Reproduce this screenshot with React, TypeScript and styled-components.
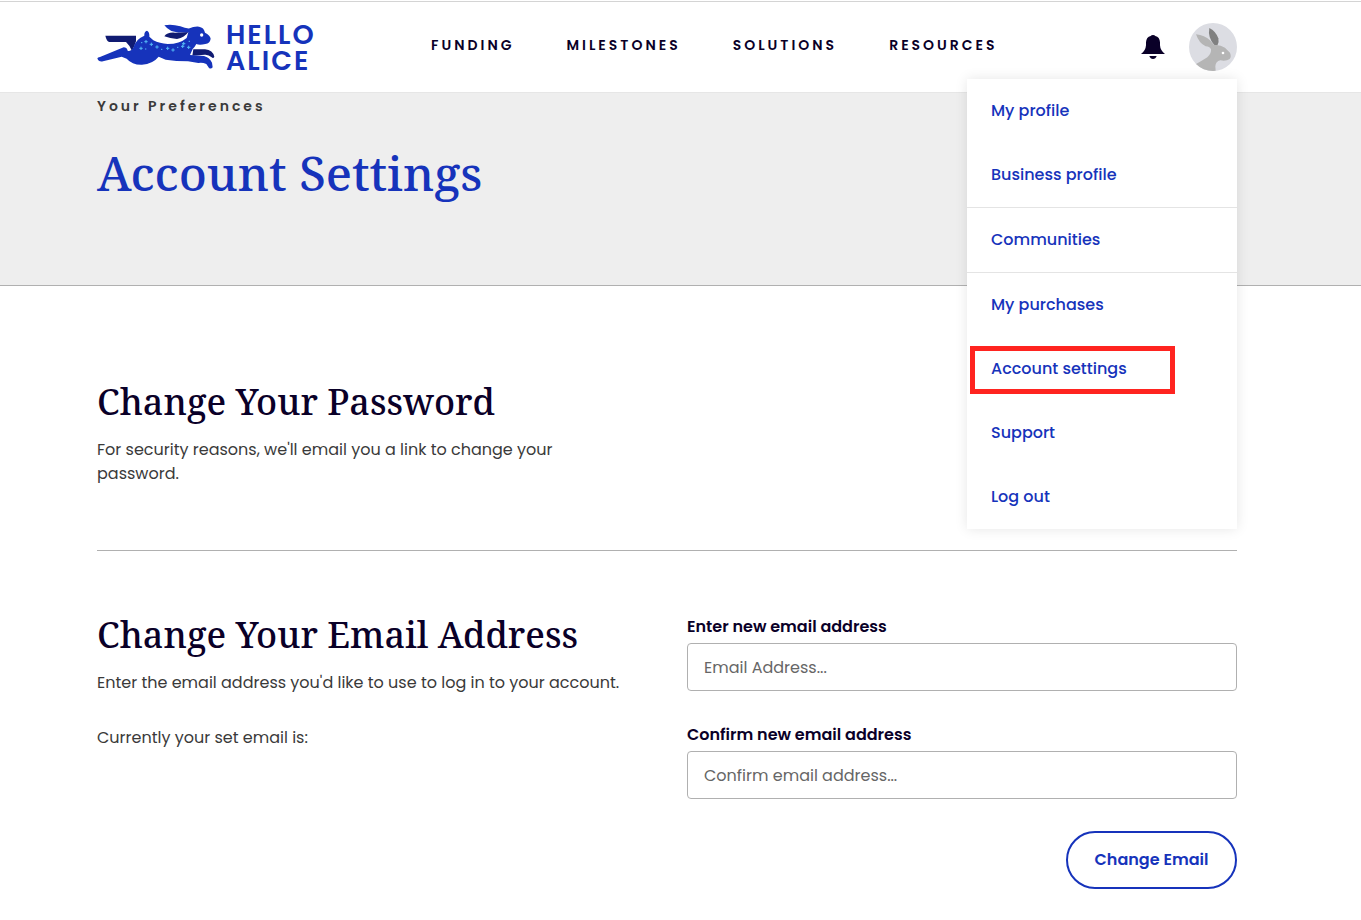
import React from "react";
import styled, { createGlobalStyle } from "styled-components";

const blue = "#1633bb";
const navy = "#0a0028";
const sans = `Poppins, Inter, "Noto Sans", sans-serif`;
const serif = `"Noto Serif", "DejaVu Serif Condensed", "DejaVu Serif", serif`;

const GlobalStyle = createGlobalStyle`
  * { box-sizing: border-box; }
  body {
    margin: 0;
    background: #fff;
    color: #3a3a3a;
    font: 400 16px/24px ${sans};
  }
  h1, h2, p, ul { margin: 0; padding: 0; }
  a { color: inherit; text-decoration: none; }
`;

const Header = styled.header`
  display: flex;
  align-items: center;
  height: 93px;
  padding: 0 124px 0 97px;
  border-top: 1px solid #fff;
  border-bottom: 1px solid #e6e6e6;
  box-shadow: inset 0 1px #d4d4d4;
`;

const Brand = styled.a`
  display: flex;
  align-items: center;
  gap: 11px;
  width: 220px;
  color: ${blue};
`;

const Wordmark = styled.span`
  display: flex;
  flex-direction: column;
  padding-top: 2px;
  font: 600 27px/26px ${sans};
  letter-spacing: 2px;
`;

const Nav = styled.nav`
  display: flex;
  gap: 52px;
  margin: 0 auto 4px 114px;
  color: ${navy};
  font-size: 14px;
  font-weight: 600;
  letter-spacing: 3px;
`;

const Account = styled.div`
  position: relative;
  display: flex;
  align-items: center;
  gap: 24px;
`;

const IconButton = styled.button`
  display: flex;
  padding: 0;
  border: 0;
  background: none;
  cursor: pointer;
`;

const Menu = styled.ul`
  position: absolute;
  top: 56px;
  right: 0;
  z-index: 1;
  width: 270px;
  list-style: none;
  background: #fff;
  box-shadow: 0 0 12px rgba(0, 0, 0, 0.1);
`;

const MenuItem = styled.li<{ $divided?: boolean }>`
  position: relative;
  border-bottom: ${(p) => (p.$divided ? "1px solid #e4e4e4" : "0")};
`;

const MenuLink = styled.a`
  display: block;
  padding: 20px 24px;
  color: ${blue};
  font-weight: 500;
`;

const Highlight = styled.span`
  position: absolute;
  top: 9px;
  left: 3px;
  width: 205px;
  height: 48px;
  border: 5px solid #ff2420;
  pointer-events: none;
`;

const Hero = styled.section`
  height: 193px;
  padding: 1px 124px 0 97px;
  background: #eee;
  border-bottom: 1px solid #b0b0b0;
`;

const Eyebrow = styled.p`
  font-size: 14px;
  font-weight: 600;
  letter-spacing: 3px;
`;

const Title = styled.h1`
  margin-top: 23px;
  color: ${blue};
  font: 500 48px/64px ${serif};
`;

const Main = styled.main`
  padding: 32px 124px 30px 97px;
`;

const Section = styled.section`
  display: grid;
  grid-template-columns: 1fr 1fr;
  gap: 40px;
  padding: 60px 0 64px;

  & + & {
    border-top: 1px solid #b0b0b0;
    padding-bottom: 0;
  }
`;

const Heading = styled.h2`
  margin-bottom: 12px;
  color: ${navy};
  font: 500 36px/48px ${serif};
  white-space: nowrap;
`;

const Copy = styled.p`
  max-width: 530px;

  & + & {
    margin-top: 31px;
  }
`;

const Form = styled.form`
  display: flex;
  flex-direction: column;
  gap: 32px;
  padding-top: 4px;
`;

const Field = styled.div`
  display: flex;
  flex-direction: column;
  gap: 4px;
`;

const Label = styled.label`
  color: ${navy};
  font-weight: 600;
`;

const Input = styled.input`
  height: 48px;
  padding: 0 16px;
  border: 1px solid #b0b0b0;
  border-radius: 4px;
  background: #fff;
  color: ${navy};
  font: inherit;
  &::placeholder {
    color: #666;
    opacity: 1;
  }
`;

const SubmitButton = styled.button`
  align-self: flex-end;
  min-width: 171px;
  height: 58px;
  padding: 0 24px;
  border: 2px solid ${blue};
  border-radius: 29px;
  background: #fff;
  color: ${blue};
  font: 600 16px/24px ${sans};
  cursor: pointer;
`;

const stars = [
  [154, 84], [167, 81], [152, 101], [166, 103], [183, 89], [200, 97], [214, 104],
  [232, 101], [248, 106], [262, 98], [277, 95], [280, 87], [297, 80], [295, 98],
];

function Rabbit() {
  return (
    <svg width="118" height="46" viewBox="20 28 354 138" aria-hidden="true">
      <g fill="#101b72">
        <path d="M45 63H137V80L131 96L125 109Q120 94 107 82H57Q49 80 45 63Z" />
        <path d="M222 65Q231 52 254 54L294 52Q283 68 260 73Q239 72 222 65Z" />
        <path d="M309 104H344Q368 107 372 126Q369 133 364 128Q355 119 343 120L306 123Z" />
      </g>
      <path
        fill={blue}
        d="M222 32Q243 27 270 35Q286 42 298 41Q309 35 326 36Q341 38 344 54Q359 61 361 72Q359 86 345 88Q327 92 318 88Q314 96 307 103L299 121L341 124Q357 128 365 144L367 158Q362 164 356 160L348 148Q335 142 324 145L293 140Q257 140 226 135L205 126Q187 148 155 150Q126 151 109 132L94 126L38 140Q25 143 21 131Q22 128 29 127L100 98Q109 98 112 108Q122 112 129 99Q137 72 162 63Q161 51 170 48Q178 52 177 66L189 77Q208 87 232 88Q268 88 289 70L294 53L270 53Q240 55 222 32Z"
      />
      <circle cx="334" cy="61" r="5" fill="#fff" />
      <g fill="none" stroke="#55b8f5" strokeWidth="3">
        {stars.map(([x, y], i) => (
          <path key={i} d={i % 3 ? `M${x - 5} ${y}h10M${x} ${y - 5}v10` : `M${x - 2} ${y}h4`} />
        ))}
      </g>
    </svg>
  );
}

function Bell() {
  return (
    <svg width="24" height="26" viewBox="0 0 72 78" fill={navy} aria-hidden="true">
      <path d="M0 60Q14 50 15 34V25Q16 9 29 6Q31 3 36 3T43 6Q56 9 57 25V34Q58 50 72 60Z" />
      <path d="M25 66H47Q44 75 36 75T25 66Z" />
    </svg>
  );
}

function Avatar() {
  return (
    <svg width="48" height="48" viewBox="0 0 144 144" aria-hidden="true">
      <defs>
        <clipPath id="avatar-circle">
          <circle cx="72" cy="72" r="72" />
        </clipPath>
      </defs>
      <g clipPath="url(#avatar-circle)">
        <path fill="#dcdde3" d="M0 0H144V144H0Z" />
        <path fill="#808080" d="M61 15Q80 24 88 46Q91 59 85 68L75 65Q56 43 61 15Z" />
        <path
          fill="#b5b5b5"
          d="M21 34Q47 37 63 52L75 66Q93 64 108 74L123 89Q128 101 122 108Q112 115 94 112Q80 115 79 130L80 144H30L16 126Q38 114 55 103Q68 91 66 79Q62 70 50 70Q30 61 21 34Z"
        />
        <circle cx="102" cy="90" r="4" fill="#fff" />
      </g>
    </svg>
  );
}

const navLinks = ["FUNDING", "MILESTONES", "SOLUTIONS", "RESOURCES"];

const menuLinks = [
  { label: "My profile" },
  { label: "Business profile", divided: true },
  { label: "Communities", divided: true },
  { label: "My purchases" },
  { label: "Account settings", highlighted: true },
  { label: "Support" },
  { label: "Log out" },
];

export default function App() {
  return (
    <>
      <GlobalStyle />
      <Header>
        <Brand href="#">
          <Rabbit />
          <Wordmark>
            <span>HELLO</span>
            <span>ALICE</span>
          </Wordmark>
        </Brand>
        <Nav>
          {navLinks.map((label) => (
            <a key={label} href="#">{label}</a>
          ))}
        </Nav>
        <Account>
          <IconButton type="button" aria-label="Notifications">
            <Bell />
          </IconButton>
          <IconButton type="button" aria-label="Account menu" aria-expanded="true">
            <Avatar />
          </IconButton>
          <Menu>
            {menuLinks.map((item) => (
              <MenuItem key={item.label} $divided={item.divided}>
                <MenuLink href="#">{item.label}</MenuLink>
                {item.highlighted && <Highlight />}
              </MenuItem>
            ))}
          </Menu>
        </Account>
      </Header>
      <Hero>
        <Eyebrow>Your Preferences</Eyebrow>
        <Title>Account Settings</Title>
      </Hero>
      <Main>
        <Section>
          <div>
            <Heading>Change Your Password</Heading>
            <Copy>For security reasons, we'll email you a link to change your password.</Copy>
          </div>
        </Section>
        <Section>
          <div>
            <Heading>Change Your Email Address</Heading>
            <Copy>Enter the email address you'd like to use to log in to your account.</Copy>
            <Copy>Currently your set email is:</Copy>
          </div>
          <Form>
            <Field>
              <Label htmlFor="new-email">Enter new email address</Label>
              <Input id="new-email" type="email" placeholder="Email Address..." />
            </Field>
            <Field>
              <Label htmlFor="confirm-email">Confirm new email address</Label>
              <Input id="confirm-email" type="email" placeholder="Confirm email address..." />
            </Field>
            <SubmitButton type="button">Change Email</SubmitButton>
          </Form>
        </Section>
      </Main>
    </>
  );
}
